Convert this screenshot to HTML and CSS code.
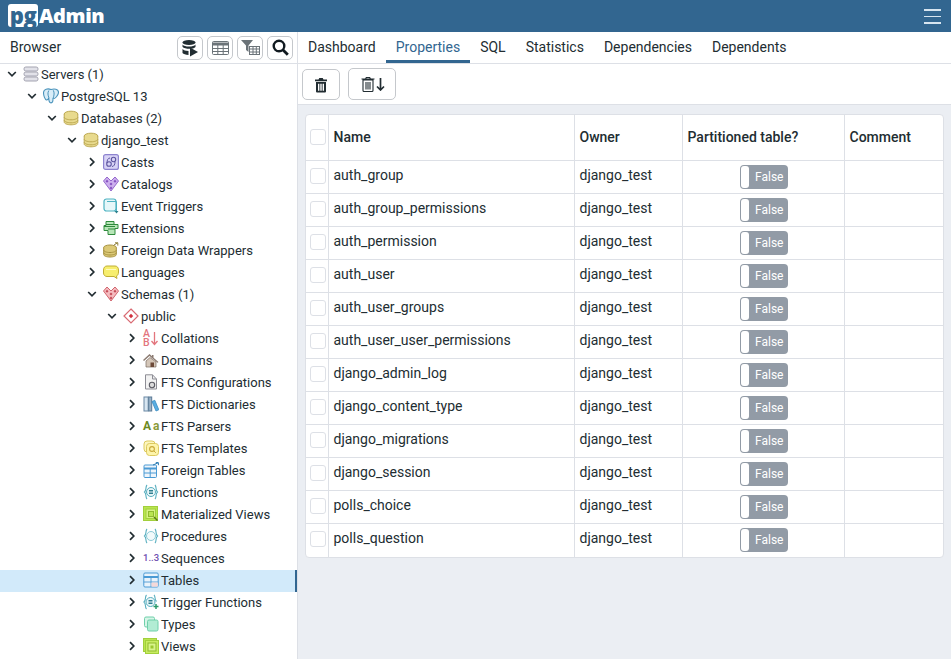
FILE: index.html
```html
<!DOCTYPE html>
<html lang="en">
<head>
<meta charset="utf-8">
<title>pgAdmin</title>
<link rel="stylesheet" href="styles.css">
</head>
<body>
<svg class="defs" width="0" height="0">
  <symbol id="down" viewBox="0 0 10 10"><path d="M1.2 3 5 6.8 8.8 3" fill="none" stroke="#222d32" stroke-width="1.7"/></symbol>
  <symbol id="right" viewBox="0 0 10 10"><path d="M3 1.2 6.8 5 3 8.8" fill="none" stroke="#222d32" stroke-width="1.7"/></symbol>
  <symbol id="db" viewBox="0 0 16 16"><ellipse cx="8" cy="4" rx="6.800" ry="2.800" fill="#e8da8e" stroke="#bda952"/><path d="M1.200 4v8c0 1.600 3 2.800 6.800 2.800s6.800-1.200 6.800-2.800V4" fill="#e8da8e" stroke="#bda952"/><path d="M1.200 7c0 1.600 3 2.800 6.800 2.800s6.800-1.200 6.800-2.800M1.200 10c0 1.600 3 2.800 6.800 2.800s6.800-1.200 6.800-2.800" fill="none" stroke="#bda952"/></symbol>
  <symbol id="servers" viewBox="0 0 16 16"><g fill="#e2e2e9" stroke="#a3a3b0"><rect x="1" y="1" width="14" height="4" rx="1.800"/><rect x="1" y="6" width="14" height="4" rx="1.800"/><rect x="1" y="11" width="14" height="4" rx="1.800"/></g></symbol>
  <symbol id="pg" viewBox="0 0 16 16"><path d="M8 1.500C5 .3.500.8.500 4.800c0 3 1.500 6.700 3 7.200 1 .3 1.800-1 2.300-2 0 2 0 4.300 1.700 4.800 2.300.4 2.500-2 2.500-4 2 0 5.500-3.300 5.500-6.500C15.500.8 11 .5 8 1.500z" fill="#d9edf8" stroke="#4a93bb" stroke-width="1.100"/><path d="M5.800 2.500c-1.300 2.300-1 4.500.2 7.500M10.300 2.300c1.200 2.300 1 5-.3 8.200" fill="none" stroke="#4a93bb"/></symbol>
  <symbol id="casts" viewBox="0 0 16 16"><rect x=".6" y=".6" width="14.800" height="14.800" rx="2" fill="#d8d3f5" stroke="#8d83cf" stroke-width="1.200"/><circle cx="6" cy="10" r="2.300" fill="none" stroke="#5d55a0" stroke-width="1.100"/><circle cx="10.500" cy="5.500" r="2.200" fill="none" stroke="#5d55a0" stroke-width="1.100"/><path d="M4 9c0-3 1-5 3-5M12 7.500c0 3-1 5-3 5" fill="none" stroke="#5d55a0"/></symbol>
  <symbol id="catalogs" viewBox="0 0 16 16"><path d="M4 1 8 5l4-4 3.500 4L8 15 .5 5z" fill="#cdb0ee" stroke="#9467cc"/><g fill="#8450c0"><path d="M4 3.800 5.500 5.300 4 6.800 2.500 5.300z"/><path d="M12 3.800l1.500 1.500L12 6.800l-1.500-1.500z"/><path d="M8 6.500l1.500 1.500L8 9.500 6.500 8z"/><path d="M8 10.500l1.500 1.500L8 13.500 6.500 12z"/></g></symbol>
  <symbol id="schemas" viewBox="0 0 16 16"><path d="M4 1 8 5l4-4 3.500 4L8 15 .5 5z" fill="#f5bcc0" stroke="#d0646d"/><g fill="#c44a55"><path d="M4 3.800 5.500 5.300 4 6.800 2.500 5.300z"/><path d="M12 3.800l1.500 1.500L12 6.800l-1.500-1.500z"/><path d="M8 6.500l1.500 1.500L8 9.500 6.500 8z"/><path d="M8 10.500l1.500 1.500L8 13.500 6.500 12z"/></g></symbol>
  <symbol id="trigger" viewBox="0 0 16 16"><rect x="1" y="1" width="12" height="12" rx="2.500" fill="#e6f7f9" stroke="#4fb3c2" stroke-width="1.200"/><path d="M4 3.500h9.500V13" fill="none" stroke="#4fb3c2"/><path d="M11.500 13h4l-2 2.500z" fill="#2c7f8c"/></symbol>
  <symbol id="ext" viewBox="0 0 16 16"><path d="M3 1.500h8v3h4v4h-3v6H5v-4H1v-5h2z" fill="#b8e6b8" stroke="#2f8a3c"/><path d="M1 6.500h11M5 9h7M3 4.500h8" fill="none" stroke="#2f8a3c"/></symbol>
  <symbol id="fdw" viewBox="0 0 16 16"><ellipse cx="7" cy="5.500" rx="6.300" ry="2.500" fill="#dcc977" stroke="#a79240"/><path d="M.7 5.500v7c0 1.500 2.800 2.500 6.300 2.500s6.300-1 6.300-2.500v-7" fill="#dcc977" stroke="#a79240"/><path d="M.7 8c0 1.500 2.800 2.500 6.300 2.500s6.300-1 6.300-2.500M.7 10.500c0 1.500 2.800 2.500 6.300 2.500s6.300-1 6.300-2.500" fill="none" stroke="#a79240"/><path d="M11 3 14.500.8M12 .8h2.800v2.800" fill="none" stroke="#8f7f3a"/></symbol>
  <symbol id="lang" viewBox="0 0 16 16"><path d="M4 2h8c2 0 3.500 1.500 3.500 4v2c0 2.500-1 3.500-2 4l.5 2.500-3-2H4c-2 0-3.500-1.500-3.500-3.500v-3C.5 3.500 2 2 4 2z" fill="#f7ee6e" stroke="#c0ae35"/><path d="M3 5.500h10" stroke="#fffbc0" fill="none"/></symbol>
  <symbol id="public" viewBox="0 0 16 16"><path d="M8 1 15 8 8 15 1 8z" fill="#fff" stroke="#d96a73" stroke-width="1.200"/><path d="M8 5.800 10.200 8 8 10.200 5.800 8z" fill="#d1323f"/></symbol>
  <symbol id="coll" viewBox="0 0 16 16"><path d="M11.500 2V14.500M8.500 11l3 3.500 3-3.500" fill="none" stroke="#e3757d" stroke-width="1.300"/></symbol>
  <symbol id="dom" viewBox="0 0 16 16"><path d="M0 8 6.500 2 9 4.300V3h1.500v2.700L15.500 10l-1 .8L6.500 4 1 9z" fill="#8b7a70"/><path d="M3 9 7 5.500l6 4.500v5H3z" fill="#d4c6b8" stroke="#7a6a60" stroke-width=".7"/><rect x="7.500" y="10.500" width="3.500" height="4.500" fill="#6d4a3a"/></symbol>
  <symbol id="ftsc" viewBox="0 0 16 16"><path d="M2.500.8h7L13.500 5v10h-11z" fill="#f2f2f2" stroke="#8d8d95"/><path d="M9.500.8V5h4" fill="none" stroke="#8d8d95"/><circle cx="9" cy="11" r="2.700" fill="#dcdcdc" stroke="#5c5c64" stroke-width="1.100"/></symbol>
  <symbol id="ftsd" viewBox="0 0 16 16"><rect x="1" y="1" width="4.200" height="14" fill="#d8e6f1" stroke="#6a88a4"/><rect x="5.700" y="1" width="3" height="14" fill="#9ab3c8" stroke="#5a7a96"/><path d="M9 5.500l2.800-1.200 4 9.500-2.800 1.200z" fill="#5aaee2" stroke="#3a8cc2" stroke-width=".8"/></symbol>
  <symbol id="ftst" viewBox="0 0 16 16"><rect x="1" y="1" width="11" height="11" rx="3" fill="#fdf6c0" stroke="#dcc95e"/><rect x="3.500" y="3.500" width="12" height="12" rx="3" fill="#fdf4aa" stroke="#dcc95e"/><circle cx="9" cy="9" r="2.400" fill="none" stroke="#c9a93a" stroke-width="1.100"/><path d="M10.800 10.800l2 2" stroke="#c9a93a"/></symbol>
  <symbol id="ftable" viewBox="0 0 16 16"><rect x="1" y="3" width="12.500" height="12.500" rx="1" fill="#eef5fb" stroke="#4a9ad4"/><path d="M1 6.500h12.500" stroke="#4a9ad4" stroke-width="2"/><path d="M7.200 6.500v9M1 11h12.500" stroke="#4a9ad4"/><path d="M10 3 15 .8M12.800.6h2.600v2.600" fill="none" stroke="#2c7cb3"/></symbol>
  <symbol id="func" viewBox="0 0 16 16"><path d="M4 1C2 3 4 6 1.500 8 4 10 2 13 4 15M12 1c2 2 0 5 2.500 7-2.500 2-.5 5-2.500 7" fill="none" stroke="#57aebf" stroke-width="1.100"/><circle cx="8" cy="8" r="4.500" fill="#e8f6f8" stroke="#57aebf"/><path d="M6 6.500h4M6 8h4M6 9.500h4" stroke="#2f7f90"/></symbol>
  <symbol id="mview" viewBox="0 0 16 16"><rect x=".5" y=".5" width="14" height="14" fill="#b9e550" stroke="#a2cf3c"/><rect x="3" y="3" width="9.500" height="9.500" fill="#d6f283" stroke="#a2cf3c"/><rect x="5.500" y="5.500" width="5" height="5" fill="#b9e550" stroke="#8fb92f"/><path d="M11 11l3.500 3.500" stroke="#5a7a18" stroke-width="1.400"/></symbol>
  <symbol id="proc" viewBox="0 0 16 16"><path d="M4 1C2 3 4 6 1.500 8 4 10 2 13 4 15M12 1c2 2 0 5 2.500 7-2.500 2-.5 5-2.500 7" fill="none" stroke="#57aebf" stroke-width="1.100"/><circle cx="8" cy="8" r="4.500" fill="#f2fafb" stroke="#8ccbd7"/></symbol>
  <symbol id="table" viewBox="0 0 16 16"><rect x=".8" y="1" width="14.400" height="14" rx="1.200" fill="#e9f3fb" stroke="#4a9ad4"/><path d="M.8 5h14.400" stroke="#4a9ad4" stroke-width="2"/><path d="M8 5v10M.8 10h14.400" stroke="#4a9ad4" stroke-width=".9"/><rect x="8.500" y="10.500" width="6.300" height="4.200" fill="#f5d9d9"/></symbol>
  <symbol id="tfunc" viewBox="0 0 16 16"><path d="M3.500 1C1.500 3 3.500 6 1 8c2.500 2 .5 5 2.500 7M11 1c2 2 0 4.500 2.500 6.500" fill="none" stroke="#57aebf" stroke-width="1.100"/><circle cx="7.500" cy="8" r="4.500" fill="#e8f6f8" stroke="#57aebf"/><path d="M5.500 6.500h4M5.500 8h4M5.500 9.500h4" stroke="#2f7f90"/><path d="M13 10v5M10.500 12.500h5" stroke="#2a9a6a" stroke-width="1.500"/></symbol>
  <symbol id="types" viewBox="0 0 16 16"><rect x="1.500" y="1" width="10" height="10" rx="1.500" fill="#d7f5e8" stroke="#6fd0aa"/><rect x="4.500" y="4" width="10.500" height="11" rx="1.500" fill="#b2ecd4" stroke="#6fd0aa"/></symbol>
  <symbol id="views" viewBox="0 0 16 16"><rect x=".5" y=".5" width="13" height="13" fill="#b9e550" stroke="#a2cf3c"/><rect x="2.500" y="2.500" width="13" height="13" fill="#c8ec62" stroke="#a2cf3c"/><rect x="5" y="5" width="8" height="8" fill="#d8f48a" stroke="#8fb92f"/><rect x="7.500" y="7.500" width="3" height="3" fill="#9ac830"/></symbol>
  <symbol id="trash" viewBox="0 0 16 16"><path d="M5.500 2.500 6.300 1h3.400l.8 1.500H14v1.800H2V2.500zM3 5h10v9.500a1 1 0 0 1-1 1H4a1 1 0 0 1-1-1zm2 1.800v7h1.400v-7zm2.300 0v7h1.400v-7zm2.300 0v7H11v-7z" fill="#222d32" fill-rule="evenodd"/></symbol>
</svg>

<header class="topbar">
  <div class="logo"><span class="logo-pg">pg</span><span class="logo-admin">Admin</span></div>
  <div class="burger"><span></span><span></span><span></span></div>
</header>

<div class="main">
  <aside class="browser">
    <div class="browser-head">
      <span class="browser-title">Browser</span>
      <div class="tool-group">
        <button class="tool" aria-label="Query tool"><svg width="18" height="18" viewBox="0 0 18 18"><ellipse cx="8" cy="3.500" rx="6.500" ry="2.500" fill="#222d32"/><path d="M1.500 5.500c1 1.500 3.500 2 6.500 2s5.500-.5 6.500-2v2.500c-1 1.400-3.500 1.800-6 1.800-3 0-6-.5-7-2zM1.500 10c1 1.300 3 1.900 6 2v4c-3-.1-5-.9-6-2z" fill="#222d32"/><path d="M9 8.500l8 4.500-8 4.500z" fill="#222d32"/></svg></button>
        <button class="tool" aria-label="View data"><svg width="17" height="14" viewBox="0 0 17 14"><rect x=".5" y=".5" width="16" height="13" rx="1" fill="#fff" stroke="#6b7378"/><path d="M.5 1.500h16v3H.5z" fill="#6b7378"/><path d="M.5 7.500h16M.5 10.500h16M5.800 4v9.500M11.200 4v9.500" stroke="#6b7378" fill="none"/></svg></button>
        <button class="tool" aria-label="Filtered rows"><svg width="19" height="15" viewBox="0 0 19 15"><path d="M0 0h12L7.500 5.500V12L5 10V5.500z" fill="#6b7378"/><rect x="8.500" y="6.500" width="10" height="8" fill="#fff" stroke="#6b7378"/><path d="M8.500 9h10M8.500 12h10M12 6.500v8M15.300 6.500v8" stroke="#6b7378"/></svg></button>
        <button class="tool" aria-label="Search"><svg width="17" height="17" viewBox="0 0 17 17"><circle cx="7" cy="7" r="5.300" fill="none" stroke="#111a20" stroke-width="2.400"/><path d="M10.800 10.800l5 5" stroke="#111a20" stroke-width="2.800"/></svg></button>
      </div>
    </div>
    <ul class="tree">
      <li class="node l0"><svg class="chev"><use href="#down"/></svg><svg class="ic"><use href="#servers"/></svg><span>Servers (1)</span></li>
      <li class="node l1"><svg class="chev"><use href="#down"/></svg><svg class="ic"><use href="#pg"/></svg><span>PostgreSQL 13</span></li>
      <li class="node l2"><svg class="chev"><use href="#down"/></svg><svg class="ic"><use href="#db"/></svg><span>Databases (2)</span></li>
      <li class="node l3"><svg class="chev"><use href="#down"/></svg><svg class="ic"><use href="#db"/></svg><span>django_test</span></li>
      <li class="node l4"><svg class="chev"><use href="#right"/></svg><svg class="ic"><use href="#casts"/></svg><span>Casts</span></li>
      <li class="node l4"><svg class="chev"><use href="#right"/></svg><svg class="ic"><use href="#catalogs"/></svg><span>Catalogs</span></li>
      <li class="node l4"><svg class="chev"><use href="#right"/></svg><svg class="ic"><use href="#trigger"/></svg><span>Event Triggers</span></li>
      <li class="node l4"><svg class="chev"><use href="#right"/></svg><svg class="ic"><use href="#ext"/></svg><span>Extensions</span></li>
      <li class="node l4"><svg class="chev"><use href="#right"/></svg><svg class="ic"><use href="#fdw"/></svg><span>Foreign Data Wrappers</span></li>
      <li class="node l4"><svg class="chev"><use href="#right"/></svg><svg class="ic"><use href="#lang"/></svg><span>Languages</span></li>
      <li class="node l4"><svg class="chev"><use href="#down"/></svg><svg class="ic"><use href="#schemas"/></svg><span>Schemas (1)</span></li>
      <li class="node l5"><svg class="chev"><use href="#down"/></svg><svg class="ic"><use href="#public"/></svg><span>public</span></li>
      <li class="node l6"><svg class="chev"><use href="#right"/></svg><span class="ic ab">A<br>B<svg class="ab-arrow"><use href="#coll"/></svg></span><span>Collations</span></li>
      <li class="node l6"><svg class="chev"><use href="#right"/></svg><svg class="ic"><use href="#dom"/></svg><span>Domains</span></li>
      <li class="node l6"><svg class="chev"><use href="#right"/></svg><svg class="ic"><use href="#ftsc"/></svg><span>FTS Configurations</span></li>
      <li class="node l6"><svg class="chev"><use href="#right"/></svg><svg class="ic"><use href="#ftsd"/></svg><span>FTS Dictionaries</span></li>
      <li class="node l6"><svg class="chev"><use href="#right"/></svg><span class="ic aa"><b>A</b><i>a</i></span><span>FTS Parsers</span></li>
      <li class="node l6"><svg class="chev"><use href="#right"/></svg><svg class="ic"><use href="#ftst"/></svg><span>FTS Templates</span></li>
      <li class="node l6"><svg class="chev"><use href="#right"/></svg><svg class="ic"><use href="#ftable"/></svg><span>Foreign Tables</span></li>
      <li class="node l6"><svg class="chev"><use href="#right"/></svg><svg class="ic"><use href="#func"/></svg><span>Functions</span></li>
      <li class="node l6"><svg class="chev"><use href="#right"/></svg><svg class="ic"><use href="#mview"/></svg><span>Materialized Views</span></li>
      <li class="node l6"><svg class="chev"><use href="#right"/></svg><svg class="ic"><use href="#proc"/></svg><span>Procedures</span></li>
      <li class="node l6"><svg class="chev"><use href="#right"/></svg><span class="ic seq">1..3</span><span>Sequences</span></li>
      <li class="node l6 selected"><svg class="chev"><use href="#right"/></svg><svg class="ic"><use href="#table"/></svg><span>Tables</span></li>
      <li class="node l6"><svg class="chev"><use href="#right"/></svg><svg class="ic"><use href="#tfunc"/></svg><span>Trigger Functions</span></li>
      <li class="node l6"><svg class="chev"><use href="#right"/></svg><svg class="ic"><use href="#types"/></svg><span>Types</span></li>
      <li class="node l6"><svg class="chev"><use href="#right"/></svg><svg class="ic"><use href="#views"/></svg><span>Views</span></li>
    </ul>
  </aside>

  <section class="content">
    <nav class="tabs">
      <a class="tab">Dashboard</a>
      <a class="tab active">Properties</a>
      <a class="tab">SQL</a>
      <a class="tab">Statistics</a>
      <a class="tab">Dependencies</a>
      <a class="tab">Dependents</a>
    </nav>
    <div class="actions">
      <button class="act act-one" aria-label="Delete"><svg width="16" height="16"><use href="#trash"/></svg></button>
      <button class="act act-two" aria-label="Delete cascade"><svg width="16" height="16" viewBox="0 0 16 16"><path d="M3 4h10v10.500a1 1 0 0 1-1 1H4a1 1 0 0 1-1-1zM1.500 3h13M5.500 3l.8-1.500h3.400l.8 1.500M6 6v7.500M8 6v7.500M10 6v7.500" fill="none" stroke="#222d32" stroke-width="1.100"/></svg><svg width="9" height="13" viewBox="0 0 9 13"><path d="M4.500 0v12M1 8.500l3.500 3.500L8 8.500" fill="none" stroke="#222d32" stroke-width="1.700"/></svg></button>
    </div>
    <div class="panel">
      <table class="grid">
        <colgroup><col class="c-check"><col class="c-name"><col class="c-owner"><col class="c-part"><col class="c-comment"></colgroup>
        <thead>
          <tr><th><span class="box"></span></th><th>Name</th><th>Owner</th><th>Partitioned table?</th><th>Comment</th></tr>
        </thead>
        <tbody>
          <tr><td><span class="box"></span></td><td>auth_group</td><td>django_test</td><td><span class="toggle"><i></i>False</span></td><td></td></tr>
          <tr><td><span class="box"></span></td><td>auth_group_permissions</td><td>django_test</td><td><span class="toggle"><i></i>False</span></td><td></td></tr>
          <tr><td><span class="box"></span></td><td>auth_permission</td><td>django_test</td><td><span class="toggle"><i></i>False</span></td><td></td></tr>
          <tr><td><span class="box"></span></td><td>auth_user</td><td>django_test</td><td><span class="toggle"><i></i>False</span></td><td></td></tr>
          <tr><td><span class="box"></span></td><td>auth_user_groups</td><td>django_test</td><td><span class="toggle"><i></i>False</span></td><td></td></tr>
          <tr><td><span class="box"></span></td><td>auth_user_user_permissions</td><td>django_test</td><td><span class="toggle"><i></i>False</span></td><td></td></tr>
          <tr><td><span class="box"></span></td><td>django_admin_log</td><td>django_test</td><td><span class="toggle"><i></i>False</span></td><td></td></tr>
          <tr><td><span class="box"></span></td><td>django_content_type</td><td>django_test</td><td><span class="toggle"><i></i>False</span></td><td></td></tr>
          <tr><td><span class="box"></span></td><td>django_migrations</td><td>django_test</td><td><span class="toggle"><i></i>False</span></td><td></td></tr>
          <tr><td><span class="box"></span></td><td>django_session</td><td>django_test</td><td><span class="toggle"><i></i>False</span></td><td></td></tr>
          <tr><td><span class="box"></span></td><td>polls_choice</td><td>django_test</td><td><span class="toggle"><i></i>False</span></td><td></td></tr>
          <tr><td><span class="box"></span></td><td>polls_question</td><td>django_test</td><td><span class="toggle"><i></i>False</span></td><td></td></tr>
        </tbody>
      </table>
    </div>
  </section>
</div>
</body>
</html>
```

FILE: styles.css
```css
* { box-sizing: border-box; }
html, body { margin: 0; height: 100%; overflow: hidden; }
body { font-family: Roboto, sans-serif; font-size: 14px; color: #222d32; background: #fff; width: 951px; height: 659px; display: flex; flex-direction: column; }
.defs { display: block; height: 0; }
button { font: inherit; padding: 0; background: #fff; display: flex; align-items: center; justify-content: center; }

.topbar { height: 32px; flex: none; background: #326690; display: flex; align-items: center; justify-content: space-between; padding: 0 10px 0 8px; }
.logo { display: flex; align-items: flex-start; height: 32px; padding-top: 4px; }
.logo-pg { width: 30px; height: 23px; background: #fff; border-radius: 3px; color: #326690; font-family: "Open Sans", sans-serif; font-weight: 800; font-size: 22px; line-height: 23px; letter-spacing: -.5px; text-align: center; }
.logo-admin { margin-left: 1px; color: #fff; font-family: "Open Sans", sans-serif; font-weight: 800; font-size: 20px; line-height: 24px; letter-spacing: -.4px; }
.burger { display: flex; flex-direction: column; gap: 5px; width: 17px; margin-top: 1px; }
.burger span { height: 1.500px; background: #d7e5f0; }

.main { flex: 1; display: flex; min-height: 0; }
.browser { width: 298px; flex: none; border-right: 1px solid #dde0e6; display: flex; flex-direction: column; overflow: hidden; }
.browser-head { height: 32px; flex: none; border-bottom: 1px solid #dde0e6; display: flex; align-items: center; justify-content: space-between; padding: 0 4px 0 10px; }
.browser-title { color: #222d32; margin-bottom: 2px; }
.tool-group { display: flex; gap: 4px; }
.tool { width: 26px; height: 24px; border: 1px solid #c5c8cc; border-radius: 5px; }

.tree { list-style: none; margin: 0; padding: 0; }
.node { height: 22px; padding-bottom: 2px; display: flex; align-items: center; white-space: nowrap; color: #222d32; font-size: 13px; }
.chev { width: 10px; height: 10px; flex: none; margin-right: 6px; }
.ic { width: 16px; height: 16px; flex: none; margin-right: 2px; }
.l0 { padding-left: 7px; }
.l1 { padding-left: 27px; }
.l2 { padding-left: 47px; }
.l3 { padding-left: 67px; }
.l4 { padding-left: 87px; }
.l5 { padding-left: 107px; }
.l6 { padding-left: 127px; }
.selected { background: #d2eafa; border-right: 2px solid #326690; }

.ab { position: relative; display: block; font-size: 10.500px; line-height: 8.500px; font-weight: 500; color: #e3757d; }
.ab-arrow { position: absolute; right: 0; top: 0; width: 16px; height: 16px; }
.aa { display: flex; align-items: baseline; justify-content: flex-start; gap: 2px; font-size: 12px; line-height: 16px; color: #6d8a1f; font-weight: 700; }
.aa b { font-weight: 700; }
.aa i { font-style: normal; color: #8a9a3a; }
.seq { font-size: 9.500px; line-height: 16px; color: #6f4fb0; font-weight: 500; white-space: nowrap; }

.content { flex: 1; min-width: 0; display: flex; flex-direction: column; background: #ebeef3; }
.tabs { height: 32px; flex: none; background: #fff; border-bottom: 1px solid #dde0e6; display: flex; }
.tab { height: 31px; padding: 0 10px; line-height: 30px; color: #222d32; }
.tab.active { color: #326690; border-bottom: 3px solid #326690; }
.actions { height: 41px; flex: none; background: #fff; border-bottom: 1px solid #dde0e6; display: flex; align-items: flex-start; padding: 5px 0 0 4px; gap: 8px; }
.act { height: 31px; border: 1px solid #c5c8cc; border-radius: 5px; }
.act-one { width: 38px; }
.act-two { width: 48px; margin-top: -1px; height: 32px; }

.panel { margin: 9px 7px 0 7px; background: #fff; border: 1px solid #dde0e6; border-radius: 4px; overflow: hidden; }
.grid { border-collapse: collapse; table-layout: fixed; width: 100%; }
.c-check { width: 22px; }
.c-name { width: 246px; }
.c-owner { width: 108px; }
.c-part { width: 162px; }
.grid th, .grid td { border: 1px solid #dde0e6; padding: 0 4px 0 5px; text-align: left; vertical-align: middle; }
.grid tr:first-child th { border-top: 0; }
.grid th:first-child, .grid td:first-child { border-left: 0; padding: 0 0 0 4px; }
.grid th:last-child, .grid td:last-child { border-right: 0; }
.grid th { height: 45px; font-weight: 500; color: #222d32; padding-bottom: 1px; }
.grid td { height: 33px; color: #222d32; }
.grid td:first-child { padding-bottom: 1px; }
.grid td:nth-child(2), .grid td:nth-child(3) { padding-bottom: 3px; }
.grid td:nth-child(4) { text-align: center; }
.grid tbody tr:last-child td { border-bottom: 0; height: 34px; padding-bottom: 1px; }
.grid tbody tr:last-child td:first-child { padding-bottom: 2px; }
.grid tbody tr:last-child td:nth-child(2), .grid tbody tr:last-child td:nth-child(3) { padding-bottom: 5px; }
.box { display: block; width: 16px; height: 16px; border: 1px solid #dde0e6; border-radius: 3px; background: #fff; }
.toggle { display: inline-flex; align-items: center; width: 48px; height: 24px; margin-left: 1px; background: #929ba6; border-radius: 4px; color: #fff; font-size: 12px; vertical-align: middle; padding-left: 1px; }
.toggle i { display: block; width: 8px; height: 22px; background: #fff; border-radius: 3px; margin-right: 6px; }
```
